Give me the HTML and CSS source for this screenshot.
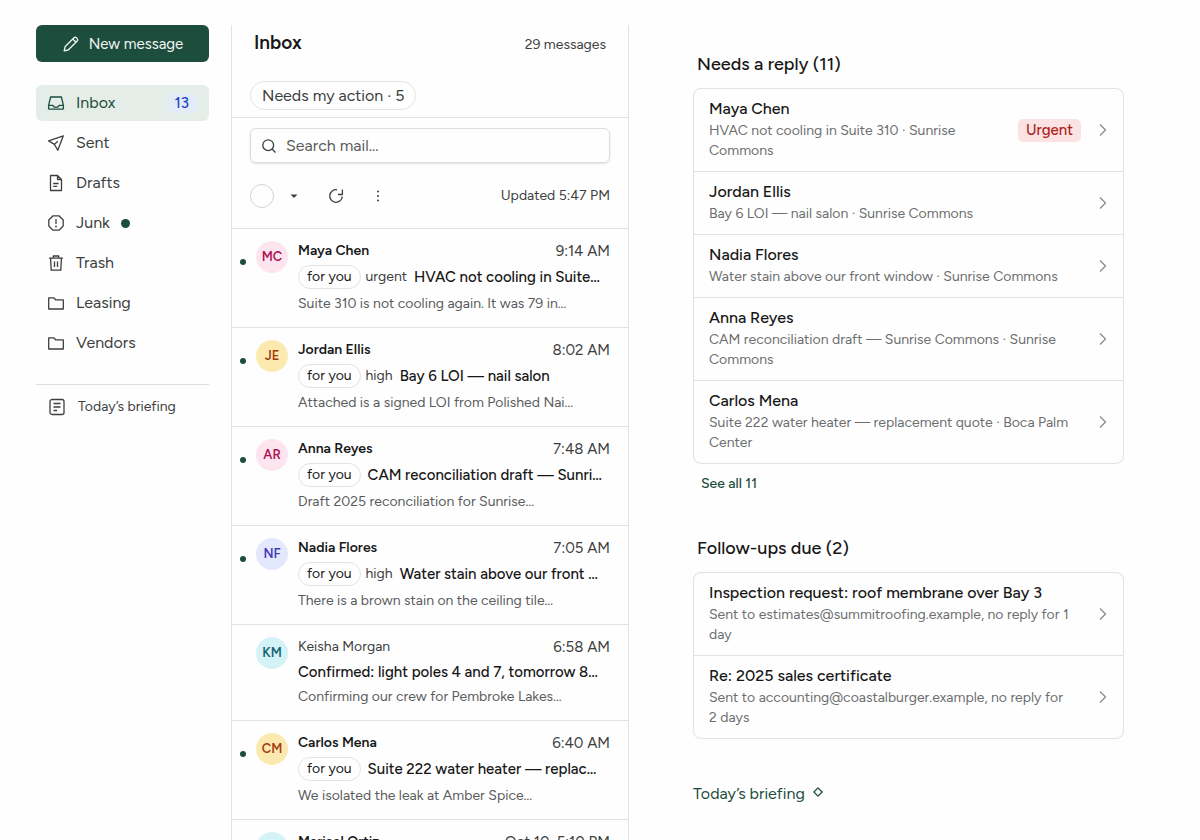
FILE: index.html
```html
<!DOCTYPE html>
<html lang="en">
<head>
<meta charset="utf-8">
<title>Inbox</title>
<meta name="viewport" content="width=device-width, initial-scale=1">
<link rel="stylesheet" href="styles.css">
</head>
<body>
<div class="app">
  <aside class="sidebar">
    <button class="compose" type="button">
      <svg class="icon" viewBox="0 0 18 18" aria-hidden="true"><path d="M2.200 15.800l.8-4L12 2.800a1.700 1.700 0 0 1 2.400 0l.8.8a1.700 1.700 0 0 1 0 2.400L6.200 15l-4 .8zM10.800 4l3.200 3.200"/></svg>
      New message
    </button>
    <nav class="folders" aria-label="Folders">
      <a class="folder folder-active" href="#inbox" aria-current="page">
        <svg class="icon" viewBox="0 0 18 18" aria-hidden="true"><path d="M3.600 3h10.800l2 8.300v3.200a.6.600 0 0 1-.6.600H2.200a.6.600 0 0 1-.6-.6v-3.200zM1.600 11.300h4l1.800 1.900h3.200l1.800-1.900h4"/></svg>
        <span>Inbox</span><span class="count">13</span>
      </a>
      <a class="folder" href="#sent">
        <svg class="icon" viewBox="0 0 18 18" aria-hidden="true"><path d="M16.300 1.800L1.600 6.900l5.800 3.500 3.400 5.900zM7.400 10.400l3.400-3.200"/></svg>
        <span>Sent</span>
      </a>
      <a class="folder" href="#drafts">
        <svg class="icon" viewBox="0 0 18 18" aria-hidden="true"><path d="M3.500 1.500h7l4 4v11h-11zM10.500 1.500v4h4M6.200 9.500h5.400M6.200 12.300h4"/></svg>
        <span>Drafts</span>
      </a>
      <a class="folder" href="#junk">
        <svg class="icon" viewBox="0 0 18 18" aria-hidden="true"><path d="M6 1.800h6L16.200 6v6L12 16.200H6L1.800 12V6zM9 5v5"/><circle class="solid" cx="9" cy="12.500" r=".9"/></svg>
        <span>Junk</span><span class="junk-dot"></span>
      </a>
      <a class="folder" href="#trash">
        <svg class="icon" viewBox="0 0 18 18" aria-hidden="true"><path d="M2 4.200h14M6.300 4.200V2h5.400v2.200M3.600 4.200l.6 12h9.600l.6-12M7.500 7.500v5.500M10.500 7.500v5.500"/></svg>
        <span>Trash</span>
      </a>
      <a class="folder" href="#leasing">
        <svg class="icon" viewBox="0 0 18 18" aria-hidden="true"><path d="M1.700 15V3.800h5l2 2h7.600V15z"/></svg>
        <span>Leasing</span>
      </a>
      <a class="folder" href="#vendors">
        <svg class="icon" viewBox="0 0 18 18" aria-hidden="true"><path d="M1.700 15V3.800h5l2 2h7.600V15z"/></svg>
        <span>Vendors</span>
      </a>
    </nav>
    <a class="briefing-nav" href="#briefing">
      <svg class="icon" viewBox="0 0 18 18" aria-hidden="true"><rect x="2" y="1.500" width="14" height="15" rx="2"/><path d="M5.500 5.500h7M5.500 9h7M5.500 12.500h3.500"/></svg>
      <span>Today’s briefing</span>
    </a>
  </aside>

  <main class="mail">
    <header class="mail-head">
      <div class="mail-title"><h1>Inbox</h1><span>29 messages</span></div>
      <button class="filter" type="button">Needs my action · 5</button>
    </header>
    <div class="tools">
      <label class="search">
        <svg class="icon icon-search" viewBox="0 0 16 16" aria-hidden="true"><circle cx="7.200" cy="7.200" r="5.400"/><path d="M11.200 11.200l3.300 3.300"/></svg>
        <input type="search" placeholder="Search mail…" aria-label="Search mail">
      </label>
      <div class="toolbar">
        <input class="select-all" type="checkbox" aria-label="Select all">
        <button class="tool tool-caret" type="button" aria-label="Selection options"><svg class="glyph" viewBox="0 0 16 16"><path class="solid" d="M4.500 6.500h7L8 10z"/></svg></button>
        <button class="tool tool-refresh" type="button" aria-label="Refresh"><svg class="glyph" viewBox="0 0 16 16"><path d="M14.400 1.500v5H10M9 1.800A6.300 6.300 0 1 0 14.300 8.500"/></svg></button>
        <button class="tool tool-more" type="button" aria-label="More actions"><svg class="glyph" viewBox="0 0 16 16"><g class="solid"><circle cx="8" cy="3.500" r="1"/><circle cx="8" cy="8" r="1"/><circle cx="8" cy="12.500" r="1"/></g></svg></button>
        <span class="updated">Updated 5:47 PM</span>
      </div>
    </div>
    <ul class="messages">
      <li class="message unread">
        <span class="avatar pink">MC</span>
        <a class="body" href="#m1">
          <span class="line"><span class="from">Maya Chen</span><time>9:14 AM</time></span>
          <span class="subject-line"><span class="chip">for you</span><span class="priority">urgent</span><span class="subject">HVAC not cooling in Suite…</span></span>
          <span class="preview">Suite 310 is not cooling again. It was 79 in…</span>
        </a>
      </li>
      <li class="message unread">
        <span class="avatar amber">JE</span>
        <a class="body" href="#m2">
          <span class="line"><span class="from">Jordan Ellis</span><time>8:02 AM</time></span>
          <span class="subject-line"><span class="chip">for you</span><span class="priority">high</span><span class="subject">Bay 6 LOI — nail salon</span></span>
          <span class="preview">Attached is a signed LOI from Polished Nai…</span>
        </a>
      </li>
      <li class="message unread">
        <span class="avatar pink">AR</span>
        <a class="body" href="#m3">
          <span class="line"><span class="from">Anna Reyes</span><time>7:48 AM</time></span>
          <span class="subject-line"><span class="chip">for you</span><span class="subject">CAM reconciliation draft — Sunri…</span></span>
          <span class="preview">Draft 2025 reconciliation for Sunrise…</span>
        </a>
      </li>
      <li class="message unread">
        <span class="avatar indigo">NF</span>
        <a class="body" href="#m4">
          <span class="line"><span class="from">Nadia Flores</span><time>7:05 AM</time></span>
          <span class="subject-line"><span class="chip">for you</span><span class="priority">high</span><span class="subject">Water stain above our front …</span></span>
          <span class="preview">There is a brown stain on the ceiling tile…</span>
        </a>
      </li>
      <li class="message">
        <span class="avatar cyan">KM</span>
        <a class="body" href="#m5">
          <span class="line"><span class="from">Keisha Morgan</span><time>6:58 AM</time></span>
          <span class="subject-line"><span class="subject">Confirmed: light poles 4 and 7, tomorrow 8…</span></span>
          <span class="preview">Confirming our crew for Pembroke Lakes…</span>
        </a>
      </li>
      <li class="message unread">
        <span class="avatar amber">CM</span>
        <a class="body" href="#m6">
          <span class="line"><span class="from">Carlos Mena</span><time>6:40 AM</time></span>
          <span class="subject-line"><span class="chip">for you</span><span class="subject">Suite 222 water heater — replac…</span></span>
          <span class="preview">We isolated the leak at Amber Spice…</span>
        </a>
      </li>
      <li class="message unread">
        <span class="avatar cyan">MO</span>
        <a class="body" href="#m7">
          <span class="line"><span class="from">Marisol Ortiz</span><time>Oct 10, 5:10 PM</time></span>
        </a>
      </li>
    </ul>
  </main>

  <section class="overview" aria-label="Overview">
    <h2>Needs a reply (11)</h2>
    <ul class="card">
      <li><a class="item" href="#r1"><span class="item-text"><strong>Maya Chen</strong><span>HVAC not cooling in Suite 310 · Sunrise Commons</span></span><span class="urgent">Urgent</span><svg class="chevron" viewBox="0 0 10 16" aria-hidden="true"><path d="M2 2.500L7.500 8 2 13.500"/></svg></a></li>
      <li><a class="item" href="#r2"><span class="item-text"><strong>Jordan Ellis</strong><span>Bay 6 LOI — nail salon · Sunrise Commons</span></span><svg class="chevron" viewBox="0 0 10 16" aria-hidden="true"><path d="M2 2.500L7.500 8 2 13.500"/></svg></a></li>
      <li><a class="item" href="#r3"><span class="item-text"><strong>Nadia Flores</strong><span>Water stain above our front window · Sunrise Commons</span></span><svg class="chevron" viewBox="0 0 10 16" aria-hidden="true"><path d="M2 2.500L7.500 8 2 13.500"/></svg></a></li>
      <li><a class="item" href="#r4"><span class="item-text"><strong>Anna Reyes</strong><span>CAM reconciliation draft — Sunrise Commons · Sunrise Commons</span></span><svg class="chevron" viewBox="0 0 10 16" aria-hidden="true"><path d="M2 2.500L7.500 8 2 13.500"/></svg></a></li>
      <li><a class="item" href="#r5"><span class="item-text"><strong>Carlos Mena</strong><span>Suite 222 water heater — replacement quote · Boca Palm Center</span></span><svg class="chevron" viewBox="0 0 10 16" aria-hidden="true"><path d="M2 2.500L7.500 8 2 13.500"/></svg></a></li>
    </ul>
    <a class="see-all" href="#all">See all 11</a>
    <h2>Follow-ups due (2)</h2>
    <ul class="card">
      <li><a class="item" href="#f1"><span class="item-text"><strong>Inspection request: roof membrane over Bay 3</strong><span>Sent to estimates@summitroofing.example, no reply for 1 day</span></span><svg class="chevron" viewBox="0 0 10 16" aria-hidden="true"><path d="M2 2.500L7.500 8 2 13.500"/></svg></a></li>
      <li><a class="item" href="#f2"><span class="item-text"><strong>Re: 2025 sales certificate</strong><span>Sent to accounting@coastalburger.example, no reply for 2 days</span></span><svg class="chevron" viewBox="0 0 10 16" aria-hidden="true"><path d="M2 2.500L7.500 8 2 13.500"/></svg></a></li>
    </ul>
    <a class="briefing-link" href="#briefing">Today’s briefing
      <svg class="diamond" viewBox="0 0 10 10" aria-hidden="true"><path d="M5 .9L9.100 5 5 9.100.9 5z"/></svg>
    </a>
  </section>
</div>
</body>
</html>
```
FILE: styles.css
```css
:root {
  --green: #1c4d3d;
  --ink: #171717;
  --text: #3d3f40;
  --muted: #6c6e6f;
  --line: #e2e3e1;
}
* { box-sizing: border-box; }
body {
  margin: 0;
  background: #fefefe;
  color: var(--text);
  font: 14px/20px Figtree, Inter, "Liberation Sans", sans-serif;
}
a { color: inherit; text-decoration: none; }
ul { list-style: none; margin: 0; padding: 0; }
button, input { font: inherit; color: inherit; margin: 0; }
h1, h2 { margin: 0; color: var(--ink); font-weight: 500; }

.app {
  display: grid;
  grid-template-columns: 173px 398px minmax(0, 1fr);
  column-gap: 22px;
  height: 100vh;
  padding: 25px 0 0 36px;
  overflow: hidden;
}
.icon, .glyph, .chevron, .diamond {
  flex: none;
  fill: none;
  stroke: currentColor;
  stroke-width: 1.3;
  stroke-linejoin: round;
}
.icon { width: 18px; height: 18px; }
.solid { fill: currentColor; stroke: none; }

.compose {
  display: flex;
  align-items: center;
  justify-content: center;
  gap: 9px;
  width: 100%;
  height: 37px;
  padding: 0;
  border: 0;
  border-radius: 6px;
  background: var(--green);
  color: #f1f6f3;
  font-size: 15px;
}
.folders {
  display: grid;
  gap: 4px;
  margin-top: 23px;
  padding-bottom: 23px;
  border-bottom: 1px solid #dcdddd;
}
.folder, .briefing-nav {
  display: flex;
  align-items: center;
  gap: 11px;
  height: 36px;
  padding: 0 12px 0 11px;
  border-radius: 6px;
}
.folder { font-size: 16px; }
.folder-active { background: #e5ede9; color: var(--green); }
.count {
  margin-left: auto;
  padding: 0 8px;
  border-radius: 6px;
  background: #e3ebf7;
  color: #1d43c4;
  font-size: 15px;
  font-weight: 500;
}
.junk-dot {
  width: 9px;
  height: 9px;
  border-radius: 50%;
  background: var(--green);
}
.briefing-nav { margin-top: 4px; padding: 0 12px; gap: 12px; }

.mail { min-width: 0; border: solid var(--line); border-width: 0 1px; overflow: hidden; }
.mail-head { padding: 0 18px 7px; border-bottom: 1px solid var(--line); }
.mail-title {
  display: flex;
  align-items: baseline;
  justify-content: space-between;
  height: 36px;
  padding: 0 4px;
}
h1 { font-size: 19px; line-height: 35px; font-weight: 600; }
.filter {
  display: block;
  height: 29px;
  margin-top: 20px;
  padding: 0 11px;
  border: 1px solid var(--line);
  border-radius: 15px;
  background: transparent;
  font-size: 16px;
}
.tools { padding: 10px 18px 20px; border-bottom: 1px solid var(--line); }
.search {
  display: flex;
  align-items: center;
  gap: 9px;
  height: 35px;
  padding: 0 10px;
  border: 1px solid #dcdddc;
  border-radius: 6px;
  box-shadow: 0 1px 2px #0000001f;
  font-size: 16px;
}
.icon-search { width: 16px; height: 16px; }
.search input {
  flex: 1;
  min-width: 0;
  padding: 0;
  border: 0;
  outline: 0;
  background: transparent;
}
.search input::placeholder { color: #5a5c5d; opacity: 1; }
.toolbar { display: flex; align-items: center; height: 24px; margin-top: 21px; }
.select-all {
  appearance: none;
  width: 24px;
  height: 24px;
  border: 1px solid #d3d5d5;
  border-radius: 50%;
}
.tool {
  display: grid;
  place-items: center;
  width: 24px;
  height: 24px;
  padding: 0;
  border: 0;
  background: transparent;
}
.glyph { width: 16px; height: 16px; }
.tool-caret { margin-left: 8px; }
.tool-refresh, .tool-more { margin-left: 18px; }
.updated { margin-left: auto; }

.message {
  position: relative;
  display: flex;
  gap: 10px;
  padding: 12px 18px 12px 24px;
  border-bottom: 1px solid var(--line);
}
.message.unread::before {
  content: "";
  position: absolute;
  left: 8px;
  top: 30px;
  width: 6px;
  height: 6px;
  border-radius: 50%;
  background: var(--green);
}
.avatar {
  flex: none;
  display: grid;
  place-items: center;
  width: 32px;
  height: 32px;
  border-radius: 50%;
  font-size: 13px;
  font-weight: 600;
}
.pink { background: #fce5ef; color: #b0124f; }
.amber { background: #fbe9b0; color: #a33a0c; }
.indigo { background: #e4e8fd; color: #4338b8; }
.cyan { background: #d3f3f6; color: #116474; }
.body { flex: 1; min-width: 0; display: grid; gap: 4px; white-space: nowrap; }
.line { display: flex; justify-content: space-between; }
.line time { font-size: 15px; }
.unread .from { color: var(--ink); font-weight: 600; }
.subject-line { display: flex; align-items: center; min-height: 21px; }
.chip {
  height: 24px;
  padding: 0 8px;
  border: 1px solid var(--line);
  border-radius: 12px;
  line-height: 22px;
  color: var(--ink);
}
.priority { margin-left: 5px; }
.subject { color: var(--ink); font-size: 15px; font-weight: 500; }
.chip ~ .subject { margin-left: 7px; }
.preview { color: #5a5c5d; line-height: 22px; }

.overview { max-width: 560px; padding: 28px 76px 0 42px; }
h2 { padding: 0 4px; font-size: 18px; line-height: 22px; }
.card { margin-top: 13px; border: 1px solid var(--line); border-bottom: 0; border-radius: 8px; }
.card li { border-bottom: 1px solid var(--line); }
.card li:last-child { border-radius: 0 0 8px 8px; }
.item { display: flex; align-items: center; padding: 10px 15px; }
.item-text {
  flex: 1;
  min-width: 0;
  display: grid;
  gap: 2px;
  padding-right: 9px;
  color: var(--muted);
}
.item-text strong { font-size: 16px; color: var(--ink); font-weight: 500; }
.urgent {
  margin-left: 16px;
  padding: 1px 8px 2px;
  border-radius: 5px;
  background: #fce3e3;
  color: #b01e1a;
  font-size: 15px;
  font-weight: 500;
}
.chevron { width: 10px; height: 16px; margin-left: 17px; color: #8b8d8d; }
.see-all {
  display: inline-block;
  margin: 10px 0 43px;
  padding: 0 8px;
  color: var(--green);
  font-weight: 500;
}
.briefing-link {
  display: inline-flex;
  align-items: center;
  gap: 8px;
  margin-top: 45px;
  color: var(--green);
  font-size: 16px;
}
.diamond { width: 10px; height: 10px; margin-bottom: 4px; }
```
